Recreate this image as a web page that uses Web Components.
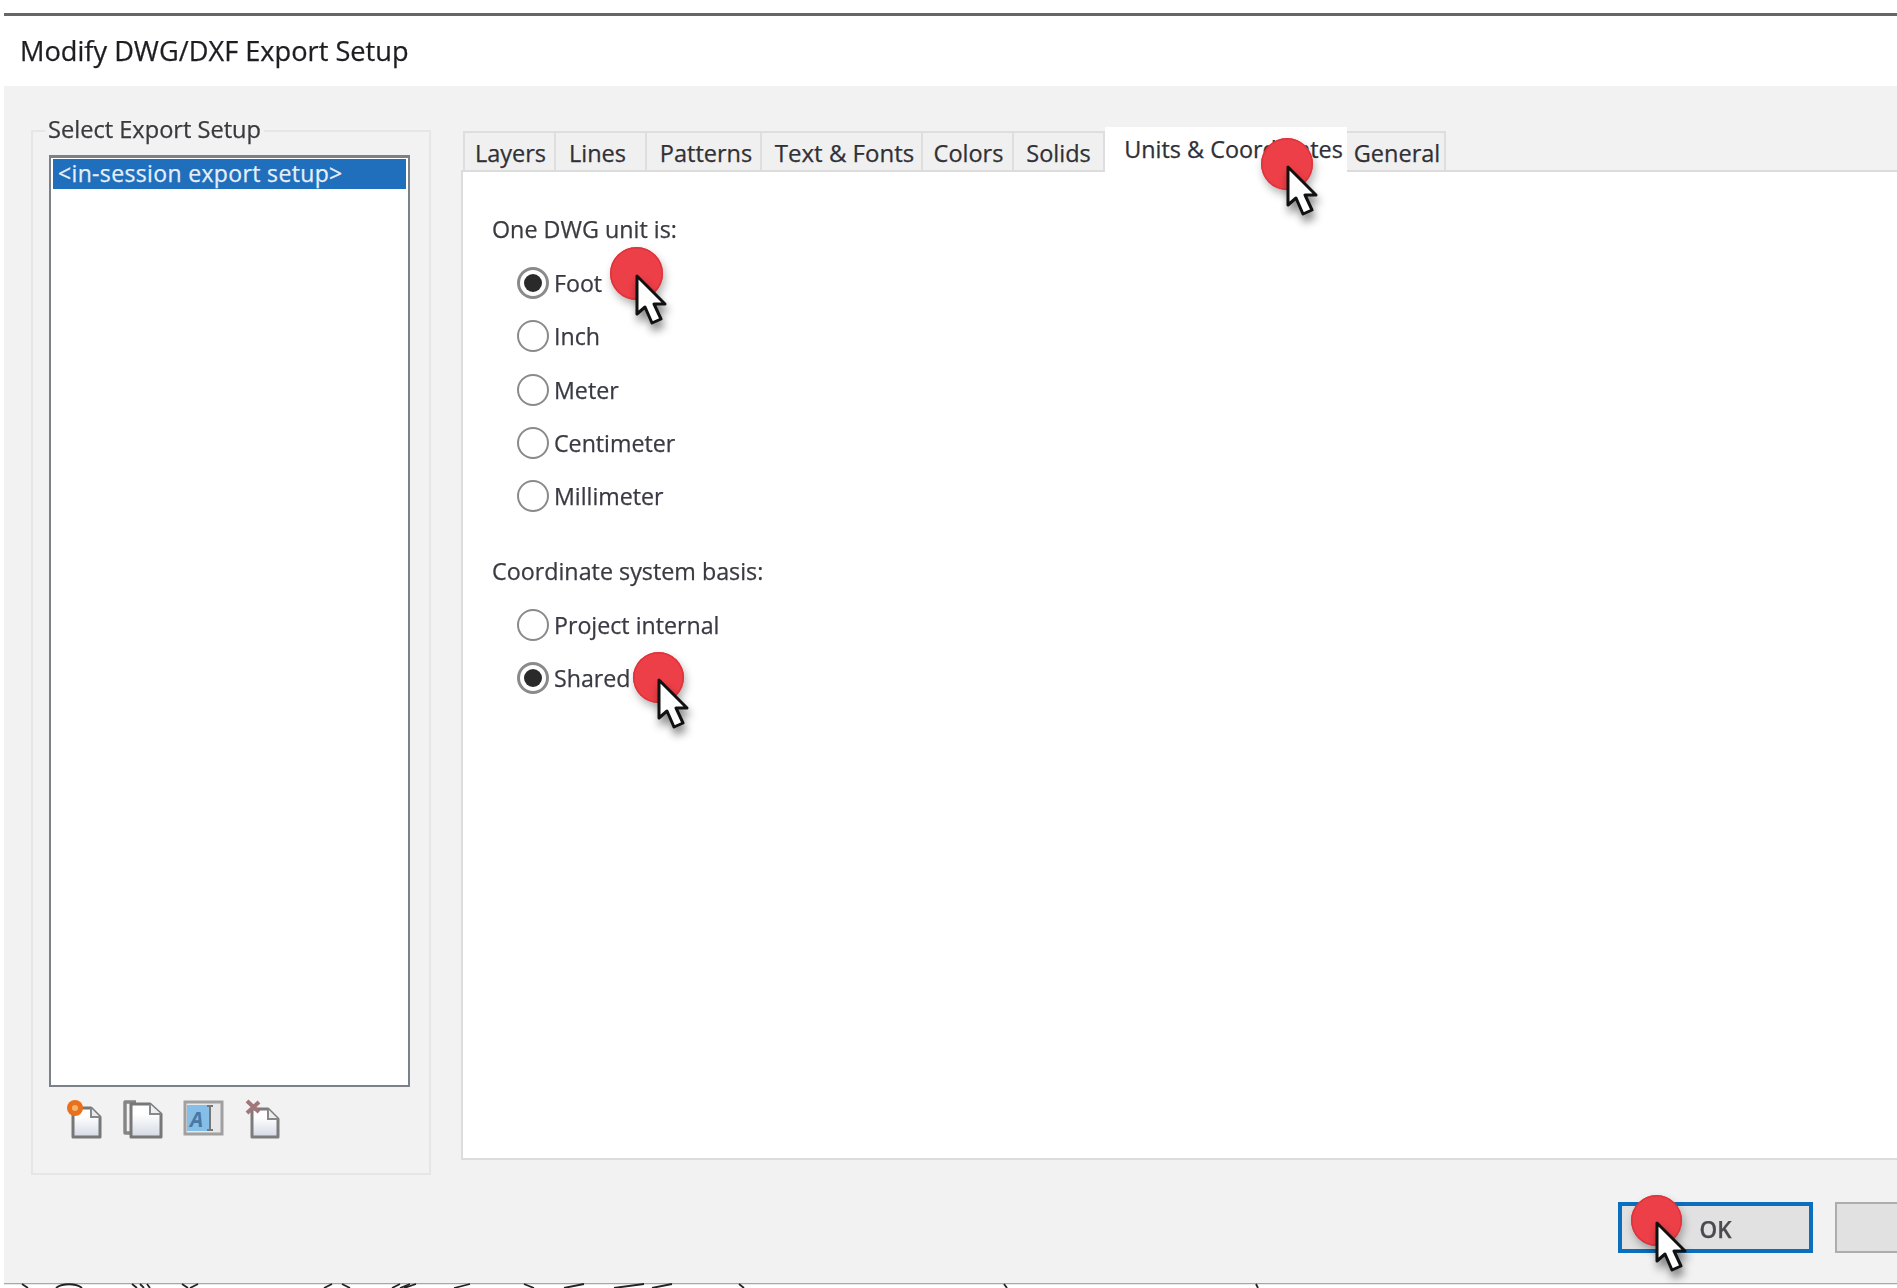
<!DOCTYPE html>
<html lang="en"><head><meta charset="utf-8"><title>Modify DWG/DXF Export Setup</title>
<style>
html,body{margin:0;padding:0;background:#fff;}
body{width:1897px;height:1288px;overflow:hidden;font-family:"Open Sans","Noto Sans","Liberation Sans",sans-serif;color:#333;-webkit-text-stroke:.25px currentColor;}
</style></head><body>
<dwg-dialog>
  <span slot="title">Modify DWG/DXF Export Setup</span>
  <group-box slot="left" legend="Select Export Setup">
    <setup-list><list-item selected>&lt;in-session export setup&gt;</list-item></setup-list>
    <tool-icons></tool-icons>
  </group-box>
  <tab-strip slot="tabs">
    <tab-item w="93" style="padding-left:2px">Layers</tab-item>
    <tab-item w="91" style="padding-right:6px">Lines</tab-item>
    <tab-item w="115" style="padding-left:5px">Patterns</tab-item>
    <tab-item w="161" style="padding-left:6px;font-size:24px">Text &amp; Fonts</tab-item>
    <tab-item w="91" style="padding-left:2px">Colors</tab-item>
    <tab-item w="91">Solids</tab-item>
    <tab-item w="242" active>Units &amp; Coordinates</tab-item>
    <tab-item w="99" style="padding-left:3px">General</tab-item>
  </tab-strip>
  <option-group slot="panel" label="One DWG unit is:">
    <radio-option checked>Foot</radio-option>
    <radio-option>Inch</radio-option>
    <radio-option>Meter</radio-option>
    <radio-option>Centimeter</radio-option>
    <radio-option>Millimeter</radio-option>
  </option-group>
  <option-group slot="panel" label="Coordinate system basis:" style="margin-top:22px">
    <radio-option>Project internal</radio-option>
    <radio-option checked>Shared</radio-option>
  </option-group>
  <dialog-button slot="footer" primary>OK</dialog-button>
  <dialog-button slot="footer" style="color:#b4692a">Cancel</dialog-button>
  <sketch-strip slot="strip"></sketch-strip>
  <click-marker slot="over" x="636" y="273" d="53"></click-marker>
  <click-marker slot="over" x="658" y="677" d="51"></click-marker>
  <click-marker slot="over" x="1287" y="164" d="52"></click-marker>
  <click-marker slot="over" x="1656" y="1220" d="51"></click-marker>
</dwg-dialog>
<script>
function def(name, css, html, init){
  customElements.define(name, class extends HTMLElement{
    constructor(){super();const r=this.attachShadow({mode:'open'});r.innerHTML='<style>'+css+'</style>'+(typeof html==='function'?html(this):html);}
    connectedCallback(){
      if(typeof html==='function'){const s=this.shadowRoot.querySelector('style').outerHTML;this.shadowRoot.innerHTML=s+html(this);}
      if(init)init(this);
    }
  });
}
def('dwg-dialog',`
:host{display:flex;flex-direction:column;position:relative;width:1897px;height:1288px;box-sizing:border-box;padding:13px 0 0 4px;overflow:hidden;filter:blur(.6px);}
.rule{height:3px;background:#666;flex:none;}
.title{height:68px;flex:none;display:flex;align-items:center;padding:0 0 2px 16px;font-size:27.2px;color:#1d1d22;}
.body{flex:1;min-height:0;background:#f2f2f2;display:flex;flex-direction:column;overflow:hidden;}
.main{display:flex;gap:30px;padding:41px 0 0 27px;height:1033px;flex:none;box-sizing:content-box;}
.tabs{flex:1;display:flex;flex-direction:column;min-width:0;}
.panel{flex:1;background:#fff;border:solid #dcdcdc;border-width:2px 0 2px 2px;box-sizing:border-box;padding:31px 0 0 29px;}
.foot{display:flex;gap:22px;padding:42px 0 0 1614px;}
`,`<div class="rule"></div><div class="title"><slot name="title"></slot></div>
<div class="body"><div class="main"><slot name="left"></slot><div class="tabs"><slot name="tabs"></slot><div class="panel"><slot name="panel"></slot></div></div></div>
<div class="foot"><slot name="footer"></slot></div></div><slot name="strip"></slot><slot name="over"></slot>`);
def('group-box',`
:host{display:flex;flex-direction:column;position:relative;width:400px;height:1045px;margin-top:3px;box-sizing:border-box;border:2px solid #e6e6e6;padding:23px 19px 0 16px;flex:none;}
.legend{position:absolute;left:12px;top:-18px;padding:0 3px;background:#f2f2f2;font-size:23.6px;line-height:30px;color:#3a3a3e;}
`,h=>`<div class="legend">${h.getAttribute('legend')}</div><slot></slot>`);
def('setup-list',`
:host{display:block;height:932px;box-sizing:border-box;border:2px solid #7c8088;border-top-width:3px;padding:1px 2px;background:#fff;flex:none;}
`,`<slot></slot>`);
def('list-item',`
:host{display:block;height:30px;line-height:29px;padding-left:5px;font-size:23px;letter-spacing:.35px;}
:host([selected]){background:#1f6fbd;color:#e6eef8;}
`,`<slot></slot>`);
def('tool-icons',`
:host{display:flex;gap:14px;margin-top:13px;padding-left:15px;}
svg{width:44px;height:40px;flex:none;overflow:visible;}
`,`
<svg viewBox="0 0 44 40"><defs><linearGradient id="d" x1="0" y1="0" x2="0" y2="1"><stop offset=".3" stop-color="#fff"/><stop offset="1" stop-color="#d3d9e4"/></linearGradient></defs>
<path d="M9 8H27L36 17V37H9Z" fill="url(#d)" stroke="#777" stroke-width="3" stroke-linejoin="round"/><path d="M27 8V17H36" fill="#e8eaf0" stroke="#888" stroke-width="2"/><circle cx="11" cy="8" r="8" fill="#e9701c"/><circle cx="11" cy="8" r="3" fill="#f6b46a"/></svg>
<svg viewBox="0 0 44 40"><path d="M14 2H3V33H9" fill="none" stroke="#858585" stroke-width="3.4" stroke-linejoin="round"/><path d="M9 4H28L39 14V37H9Z" fill="url(#d2)" stroke="#777" stroke-width="3" stroke-linejoin="round"/><path d="M28 4V14H39" fill="#eceef2" stroke="#888" stroke-width="2"/><defs><linearGradient id="d2" x1="0" y1="0" x2="0" y2="1"><stop offset=".3" stop-color="#fff"/><stop offset="1" stop-color="#d3d9e4"/></linearGradient></defs></svg>
<svg viewBox="0 0 44 40" style="margin-left:1px"><rect x="4" y="2" width="37" height="32" fill="#e8e8e8" stroke="#a0a0a0" stroke-width="3"/><rect x="6" y="5" width="22" height="26" fill="#85bfe8"/><text x="9" y="27" font-family="Open Sans" font-style="italic" font-weight="700" font-size="21" fill="#4a78a6" style="-webkit-text-stroke:0">A</text><path d="M29 6V30M26 6H32M26 30H32" stroke="#777" stroke-width="2" fill="none"/></svg>
<svg viewBox="0 0 44 40" style="margin-left:-1px"><path d="M14 9H30L40 19V37H14Z" fill="url(#d3)" stroke="#7c7c7c" stroke-width="3" stroke-linejoin="round"/><path d="M30 9V19H40" fill="#eceef2" stroke="#888" stroke-width="2"/><path d="M9 1L21 12M21 2L9 13" stroke="#a0777a" stroke-width="4"/><defs><linearGradient id="d3" x1="0" y1="0" x2="0" y2="1"><stop offset=".3" stop-color="#fff"/><stop offset="1" stop-color="#d3d9e4"/></linearGradient></defs></svg>`);
def('tab-strip',`
:host{display:flex;align-items:flex-end;height:45px;flex:none;position:relative;z-index:1;margin:0 0 -2px 2px;}
`,`<slot></slot>`);
def('tab-item',`
:host{display:flex;align-items:center;justify-content:center;box-sizing:border-box;height:39px;margin-bottom:2px;background:#f0f0f0;border:solid #dedede;border-width:2px 2px 0 0;font-size:23.5px;color:#303036;padding-top:2px;}
:host(:first-child){border-left:2px solid #dedede;}
:host([active]){height:45px;margin-bottom:0;background:#fff;border-color:#fff;padding:0 0 4px 17px;font-size:23.4px;}
`,h=>{h.style.width=h.getAttribute('w')+'px';return `<slot></slot>`;});
def('option-group',`
:host{display:block;}
.l{height:53.3px;line-height:53.3px;font-size:23.3px;color:#3a3a40;}
`,h=>`<div class="l">${h.getAttribute('label')}</div><slot></slot>`);
def('radio-option',`
:host{display:flex;align-items:center;gap:5px;height:53.3px;padding-left:25px;font-size:23.2px;color:#3a3a44;}
.c{width:32px;height:32px;box-sizing:border-box;border:2.5px solid #8a8a8a;border-radius:50%;background:#fff;display:flex;align-items:center;justify-content:center;flex:none;}
.d{width:18px;height:18px;border-radius:50%;background:#2a2a2a;display:none;}
:host([checked]) .c{border-width:3px;}
:host([checked]) .d{display:block;}
`,`<span class="c"><span class="d"></span></span><span><slot></slot></span>`);
def('dialog-button',`
:host{display:flex;align-items:center;justify-content:center;width:195px;height:51px;box-sizing:border-box;flex:none;background:#e1e1e1;border:2px solid #adadad;font-size:22.5px;color:#444;padding-top:3px;}
:host([primary]){border:4px solid #0b6fbe;font-weight:600;color:#4a4a50;}
`,`<slot></slot>`);
def('sketch-strip',`
:host{display:block;height:5px;flex:none;border-top:0;position:relative;}
svg{display:block;width:1893px;height:5px;}
`,`<svg viewBox="0 0 1893 5" fill="none" stroke="#222" stroke-width="1.8"><path d="M0 .5H1893" stroke="#a8a8a8" stroke-width="1.5"/><path d="M18 1L24 5M52 5C58 0 72 0 78 5M128 1L133 5M136 1L140 5M143 1L146 5M178 1L184 5M194 1L186 5M320 5L328 1M338 1L346 5M388 5L396 1M400 5L412 1M406 1L396 5M450 5L466 1M520 1L530 5M560 5L580 1M610 5L640 1M648 5L668 1M735 1L740 5M1000 1L1003 5M1252 1L1254 5"/></svg>`);
def('click-marker',`
:host{position:absolute;display:block;width:0;height:0;z-index:5;}
.dot{position:absolute;border-radius:50%;background:#ed3f47;box-shadow:inset 0 0 0 1.5px #dd343c,2px 5px 8px rgba(0,0,0,.3);}
svg{position:absolute;width:32px;height:52px;overflow:visible;filter:drop-shadow(2px 7px 4px rgba(0,0,0,.45));}
`,h=>{const x=+h.getAttribute('x'),y=+h.getAttribute('y'),d=+h.getAttribute('d');h.style.left=x+'px';h.style.top=y+'px';
return `<div class="dot" style="left:${-d/2}px;top:${-d/2}px;width:${d}px;height:${d}px"></div><svg style="left:1px;top:3px" viewBox="0 0 32 52"><path d="M0 0L0 38L8 31L15 47L24 43L17 28L28 28Z" fill="#fff" stroke="#111" stroke-width="3" stroke-linejoin="round"/></svg>`;});
</script>
</body></html>
